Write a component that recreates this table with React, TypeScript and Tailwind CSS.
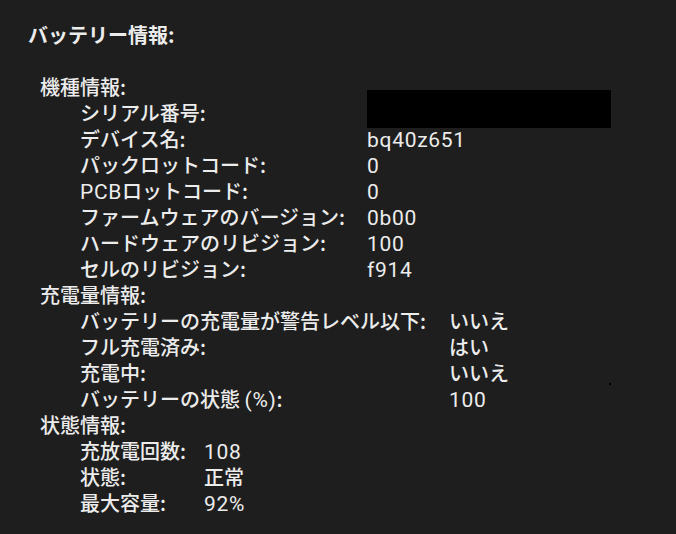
import React from "react";

const font = { fontFamily: '"Noto Sans CJK JP", "Noto Sans", sans-serif' };

function L({ children }: { children: React.ReactNode }) {
  return (
    <span className="tracking-[0.7px] font-normal text-[21px]" style={{ fontFamily: 'Roboto, "Noto Sans CJK JP", sans-serif' }}>
      {children}
    </span>
  );
}

function Row({ label, value, w }: { label: React.ReactNode; value?: React.ReactNode; w: string }) {
  return (
    <div className="flex h-[26px] items-center pl-[40px]">
      <div className={w + " shrink-0"}>{label}</div>
      {value !== undefined && <div>{value}</div>}
    </div>
  );
}

export default function App() {
  return (
    <div
      className="relative w-[676px] h-[534px] bg-[#1e1e1e] text-[#ececec] text-[20px] leading-[26px] font-medium overflow-hidden"
      style={font}
    >
      <div className="pl-[28px] pt-[22px] font-bold">バッテリー情報:</div>
      <div className="pl-[40px] pt-[26px]">
        <div className="h-[26px] flex items-center">機種情報:</div>
        <div className="flex h-[26px] items-center pl-[40px]">
          <div className="w-[287px] shrink-0">シリアル番号:</div>
          <div className="w-[244px] h-[38px] bg-black -mt-[8px]" />
        </div>
        <Row w="w-[287px]" label="デバイス名:" value={<L>bq40z651</L>} />
        <Row w="w-[287px]" label="パックロットコード:" value={<L>0</L>} />
        <Row w="w-[287px]" label={<><L>PCB</L>ロットコード:</>} value={<L>0</L>} />
        <Row w="w-[287px]" label="ファームウェアのバージョン:" value={<L>0b00</L>} />
        <Row w="w-[287px]" label="ハードウェアのリビジョン:" value={<L>100</L>} />
        <Row w="w-[287px]" label="セルのリビジョン:" value={<L>f914</L>} />
        <div className="h-[26px] flex items-center">充電量情報:</div>
        <Row w="w-[369px]" label="バッテリーの充電量が警告レベル以下:" value="いいえ" />
        <Row w="w-[369px]" label="フル充電済み:" value="はい" />
        <Row w="w-[369px]" label="充電中:" value="いいえ" />
        <Row w="w-[369px]" label={<>バッテリーの状態 <L>(%)</L>:</>} value={<L>100</L>} />
        <div className="h-[26px] flex items-center">状態情報:</div>
        <Row w="w-[124px]" label="充放電回数:" value={<L>108</L>} />
        <Row w="w-[124px]" label="状態:" value="正常" />
        <Row w="w-[124px]" label="最大容量:" value={<L>92%</L>} />
      </div>
      <div className="absolute left-[609px] top-[383px] w-[2px] h-[2px] bg-black" />
    </div>
  );
}
